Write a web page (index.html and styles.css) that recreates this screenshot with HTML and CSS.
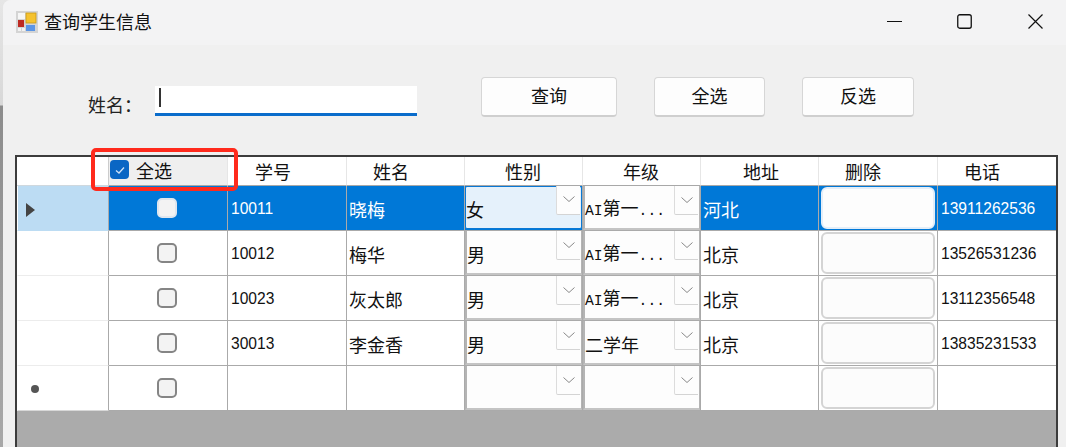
FILE: index.html
```html
<!DOCTYPE html>
<html lang="zh-CN">
<head>
<meta charset="utf-8">
<title>查询学生信息</title>
<link rel="stylesheet" href="styles.css">
</head>
<body>
<div class="window">
  <header class="titlebar">
    <svg class="app-icon" viewBox="0 0 22 22" width="22" height="22">
      <rect width="22" height="22" fill="#d4d4d4"/>
      <rect x="2" y="2" width="7" height="6" fill="#f6f6f6"/>
      <rect x="10" y="2" width="10" height="10" fill="#f5c22e" stroke="#c99a18" stroke-width=".8"/>
      <rect x="2" y="9" width="6" height="7" fill="#bd2a22"/>
      <rect x="10" y="14" width="9" height="6" fill="#5b95e6"/>
      <rect x="2" y="17" width="3" height="3" fill="#f2f2f2"/>
      <rect x="6" y="17" width="3" height="3" fill="#f2f2f2"/>
    </svg>
    <span class="title">查询学生信息</span>
    <div class="win-controls">
      <svg class="min-icon" viewBox="0 0 15 15" width="15" height="15"><path d="M0 7.5H15" stroke="#111" fill="none"/></svg>
      <svg class="max-icon" viewBox="0 0 15 15" width="15" height="15"><rect x=".75" y=".75" width="13.5" height="13.5" rx="2" fill="none" stroke="#111" stroke-width="1.3"/></svg>
      <svg class="close-icon" viewBox="0 0 15 15" width="15" height="15"><path d="M.5.5L14.5 14.5M14.5.5L.5 14.5" stroke="#111" stroke-width="1.2" fill="none"/></svg>
    </div>
  </header>

  <section class="search">
    <span class="search-label">姓名：</span>
    <div class="search-input"><span class="caret"></span></div>
    <button class="btn btn-query">查询</button>
    <button class="btn btn-all">全选</button>
    <button class="btn btn-invert">反选</button>
  </section>

  <section class="table-area">
    <div class="table">
      <div class="hd hd-corner"></div>
      <div class="hd hd-check"><span class="check-on"><svg viewBox="0 0 18 18" width="18" height="18"><path d="M5 9.5L8 12L13 6.5" stroke="#cfe2f7" stroke-width="1.3" fill="none"/></svg></span><span>全选</span></div>
      <div class="hd pad-27">学号</div>
      <div class="hd pad-26">姓名</div>
      <div class="hd pad-40">性别</div>
      <div class="hd pad-40">年级</div>
      <div class="hd pad-42">地址</div>
      <div class="hd pad-26">删除</div>
      <div class="hd pad-26">电话</div>

      <div class="rh rh-sel"><svg class="arrow" viewBox="0 0 9 14" width="9" height="14"><path d="M0 0L9 7L0 14Z" fill="#444"/></svg></div>
      <div class="cell sel center"><span class="box box-sel"></span></div>
      <div class="cell sel num">10011</div>
      <div class="cell sel">晓梅</div>
      <div class="cell sel combo-cell"><div class="combo combo-focus"><span>女</span><span class="drop"><svg viewBox="0 0 12 6" width="12" height="6"><path d="M.5.5L6 5.5L11.5.5" stroke="#888" fill="none"/></svg></span></div></div>
      <div class="cell sel combo-cell"><div class="combo"><span><span class="latin">AI</span>第一<span class="latin">...</span></span><span class="drop"><svg viewBox="0 0 12 6" width="12" height="6"><path d="M.5.5L6 5.5L11.5.5" stroke="#888" fill="none"/></svg></span></div></div>
      <div class="cell sel">河北</div>
      <div class="cell sel btn-cell"><div class="cell-btn cell-btn-sel"></div></div>
      <div class="cell sel num">13911262536</div>

      <div class="rh"></div>
      <div class="cell center"><span class="box"></span></div>
      <div class="cell num">10012</div>
      <div class="cell">梅华</div>
      <div class="cell combo-cell"><div class="combo"><span>男</span><span class="drop"><svg viewBox="0 0 12 6" width="12" height="6"><path d="M.5.5L6 5.5L11.5.5" stroke="#888" fill="none"/></svg></span></div></div>
      <div class="cell combo-cell"><div class="combo"><span><span class="latin">AI</span>第一<span class="latin">...</span></span><span class="drop"><svg viewBox="0 0 12 6" width="12" height="6"><path d="M.5.5L6 5.5L11.5.5" stroke="#888" fill="none"/></svg></span></div></div>
      <div class="cell">北京</div>
      <div class="cell btn-cell"><div class="cell-btn"></div></div>
      <div class="cell num">13526531236</div>

      <div class="rh"></div>
      <div class="cell center"><span class="box"></span></div>
      <div class="cell num">10023</div>
      <div class="cell">灰太郎</div>
      <div class="cell combo-cell"><div class="combo"><span>男</span><span class="drop"><svg viewBox="0 0 12 6" width="12" height="6"><path d="M.5.5L6 5.5L11.5.5" stroke="#888" fill="none"/></svg></span></div></div>
      <div class="cell combo-cell"><div class="combo"><span><span class="latin">AI</span>第一<span class="latin">...</span></span><span class="drop"><svg viewBox="0 0 12 6" width="12" height="6"><path d="M.5.5L6 5.5L11.5.5" stroke="#888" fill="none"/></svg></span></div></div>
      <div class="cell">北京</div>
      <div class="cell btn-cell"><div class="cell-btn"></div></div>
      <div class="cell num">13112356548</div>

      <div class="rh"></div>
      <div class="cell center"><span class="box"></span></div>
      <div class="cell num">30013</div>
      <div class="cell">李金香</div>
      <div class="cell combo-cell"><div class="combo"><span>男</span><span class="drop"><svg viewBox="0 0 12 6" width="12" height="6"><path d="M.5.5L6 5.5L11.5.5" stroke="#888" fill="none"/></svg></span></div></div>
      <div class="cell combo-cell"><div class="combo"><span>二学年</span><span class="drop"><svg viewBox="0 0 12 6" width="12" height="6"><path d="M.5.5L6 5.5L11.5.5" stroke="#888" fill="none"/></svg></span></div></div>
      <div class="cell">北京</div>
      <div class="cell btn-cell"><div class="cell-btn"></div></div>
      <div class="cell num">13835231533</div>

      <div class="rh rh-new"><span class="star"></span></div>
      <div class="cell center"><span class="box"></span></div>
      <div class="cell"></div>
      <div class="cell"></div>
      <div class="cell combo-cell"><div class="combo"><span class="drop"><svg viewBox="0 0 12 6" width="12" height="6"><path d="M.5.5L6 5.5L11.5.5" stroke="#888" fill="none"/></svg></span></div></div>
      <div class="cell combo-cell"><div class="combo"><span class="drop"><svg viewBox="0 0 12 6" width="12" height="6"><path d="M.5.5L6 5.5L11.5.5" stroke="#888" fill="none"/></svg></span></div></div>
      <div class="cell"></div>
      <div class="cell btn-cell"><div class="cell-btn"></div></div>
      <div class="cell"></div>
    </div>
    <div class="highlight"></div>
  </section>
</div>
</body>
</html>
```

FILE: styles.css
```css
* { box-sizing: border-box; }
html, body { height: 100%; }
body {
  margin: 0;
  overflow: hidden;
  font-family: "Noto Sans CJK SC", "Liberation Sans", sans-serif;
  font-size: 18px;
  color: #111;
  background: linear-gradient(#e6e6e6 0, #d8d8d8 105px, #8c8c8c 106px, #a8a8a8 100%);
}
.window {
  margin-left: 3px;
  height: 447px;
  background: #f0f0f0;
  border-top-left-radius: 8px;
  display: flex;
  flex-direction: column;
  overflow: hidden;
}
.titlebar {
  height: 45px;
  flex: none;
  background: #f3f3f4;
  display: flex;
  align-items: center;
  padding-left: 13px;
}
.app-icon { margin-top: -2px; }
.title { margin-left: 6px; line-height: 1; margin-top: -3px; }
.win-controls { margin-left: auto; display: flex; align-items: center; margin-top: -3px; }
.min-icon { margin-right: 55px; }
.max-icon { margin-right: 56px; }
.close-icon { margin-right: 23px; }

.search {
  height: 110px;
  flex: none;
  display: flex;
  align-items: flex-start;
  padding: 32px 0 0 85px;
}
.search-label { width: 67px; line-height: 20px; margin-top: 17px; color: #222; }
.search-input {
  width: 262px;
  height: 30px;
  margin-top: 9px;
  background: #fff;
  border-bottom: 3px solid #0a6ccb;
  padding: 2px 0 0 4px;
}
.caret { display: block; width: 1.5px; height: 19px; background: #333; }
.btn {
  height: 40px;
  background: #fdfdfd;
  border: 1px solid #d6d6d6;
  border-bottom: 2px solid #cfcfcf;
  border-radius: 4px;
  font: inherit;
  color: #111;
  padding: 0 0 3px;
}
.btn-query { width: 136px; margin-left: 64px; }
.btn-all { width: 111px; margin-left: 37px; }
.btn-invert { width: 112px; margin-left: 37px; }

.table-area {
  position: relative;
  flex: 1;
  margin: 0 8px 0 12px;
  background: #ababab;
  border: 2px solid #3c3c3c;
  border-bottom: 0;
}
.table {
  display: grid;
  grid-template-columns: 92px 119px 119px 118px 118px 118px 118px 119px 118px;
  grid-template-rows: 29px repeat(5, 45px);
}
.hd {
  background: #fff;
  border-right: 1px solid #e6e6e6;
  border-bottom: 1px solid #a8a8a8;
  display: flex;
  align-items: center;
  line-height: 1;
  padding-bottom: 1px;
}
.hd-corner { border-bottom-color: #cfd8de; border-right-color: #ccc; }
.hd:nth-child(9) { border-right: 0; }
.pad-26 { padding-left: 26px; }
.pad-27 { padding-left: 27px; }
.pad-40 { padding-left: 40px; }
.pad-42 { padding-left: 42px; }
.hd-check { background: #efefef; padding-left: 1px; gap: 7px; padding-bottom: 3px; }
.check-on {
  width: 19px;
  height: 19px;
  border-radius: 4px;
  background: #0a66c4;
  display: flex;
  align-items: center;
  justify-content: center;
}
.rh {
  background: #fff;
  border-left: 1px solid #fff;
  border-right: 1px solid #aaa;
  border-bottom: 1px solid #ececec;
  display: flex;
  align-items: center;
}
.rh-sel { background: #bcdcf3; border-left-color: #fff; padding-left: 8px; padding-top: 3px; border-bottom-color: #bcdcf3; }
.rh-new { border-bottom-color: #d8d8d8; padding-left: 13px; padding-top: 2px; }
.star { width: 8px; height: 8px; border-radius: 50%; background: #555; }
.cell {
  background: #fff;
  border-right: 1px solid #aaa;
  border-bottom: 1px solid #aaa;
  display: flex;
  align-items: center;
  padding: 2px 0 0 2px;
  line-height: 1;
  white-space: nowrap;
}
.table > .cell:nth-child(9n) { border-right: 0; }
.sel { background: #0078d7; color: #fff; }
.num { font-family: "Liberation Sans", sans-serif; font-size: 15.6px; padding-left: 3px; }
.center { justify-content: center; padding: 0 3px 0 0; }
.box {
  width: 20px;
  height: 20px;
  border: 2px solid #858585;
  border-radius: 5px;
  background: #f3f3f3;
}
.box-sel { border-color: #dfe6ee; }
.combo-cell { padding: 0; align-items: stretch; }
.combo {
  position: relative;
  flex: 1;
  background: #fdfdfd;
  color: #111;
  border-left: 2px solid #b4b4b4;
  border-right: 1px solid #b4b4b4;
  border-bottom: 2px solid #c4c4c4;
  display: flex;
  align-items: center;
  padding: 3px 0 0 0;
}
.combo-focus {
  background: #e5f1fb;
  border: 1.5px solid #0a78d4;
  border-radius: 2px;
  margin: 0 0 1px;
}
.latin { font-family: "Liberation Mono", monospace; font-size: 14.67px; }
.drop {
  position: absolute;
  top: 0;
  right: 1px;
  width: 24px;
  height: 29px;
  background: #fdfdfd;
  border-left: 1px solid #dcdcdc;
  border-bottom: 1px solid #d4d4d4;
  border-bottom-left-radius: 2px;
  display: flex;
  align-items: center;
  justify-content: center;
  padding-bottom: 1px;
}
.combo-focus .drop { top: -1.5px; }
.btn-cell { padding: 1px 2px 1px 2px; align-items: stretch; }
.cell-btn {
  flex: 1;
  background: #fcfcfc;
  border: 2px solid #d4d4d4;
  border-radius: 6px;
}
.cell-btn-sel { background: #fdfdfd; border-color: #e4eef8; }
.highlight {
  position: absolute;
  left: 74px;
  top: -9px;
  width: 147px;
  height: 43px;
  border: 4px solid #ff2a1c;
  border-radius: 5px;
}
```
